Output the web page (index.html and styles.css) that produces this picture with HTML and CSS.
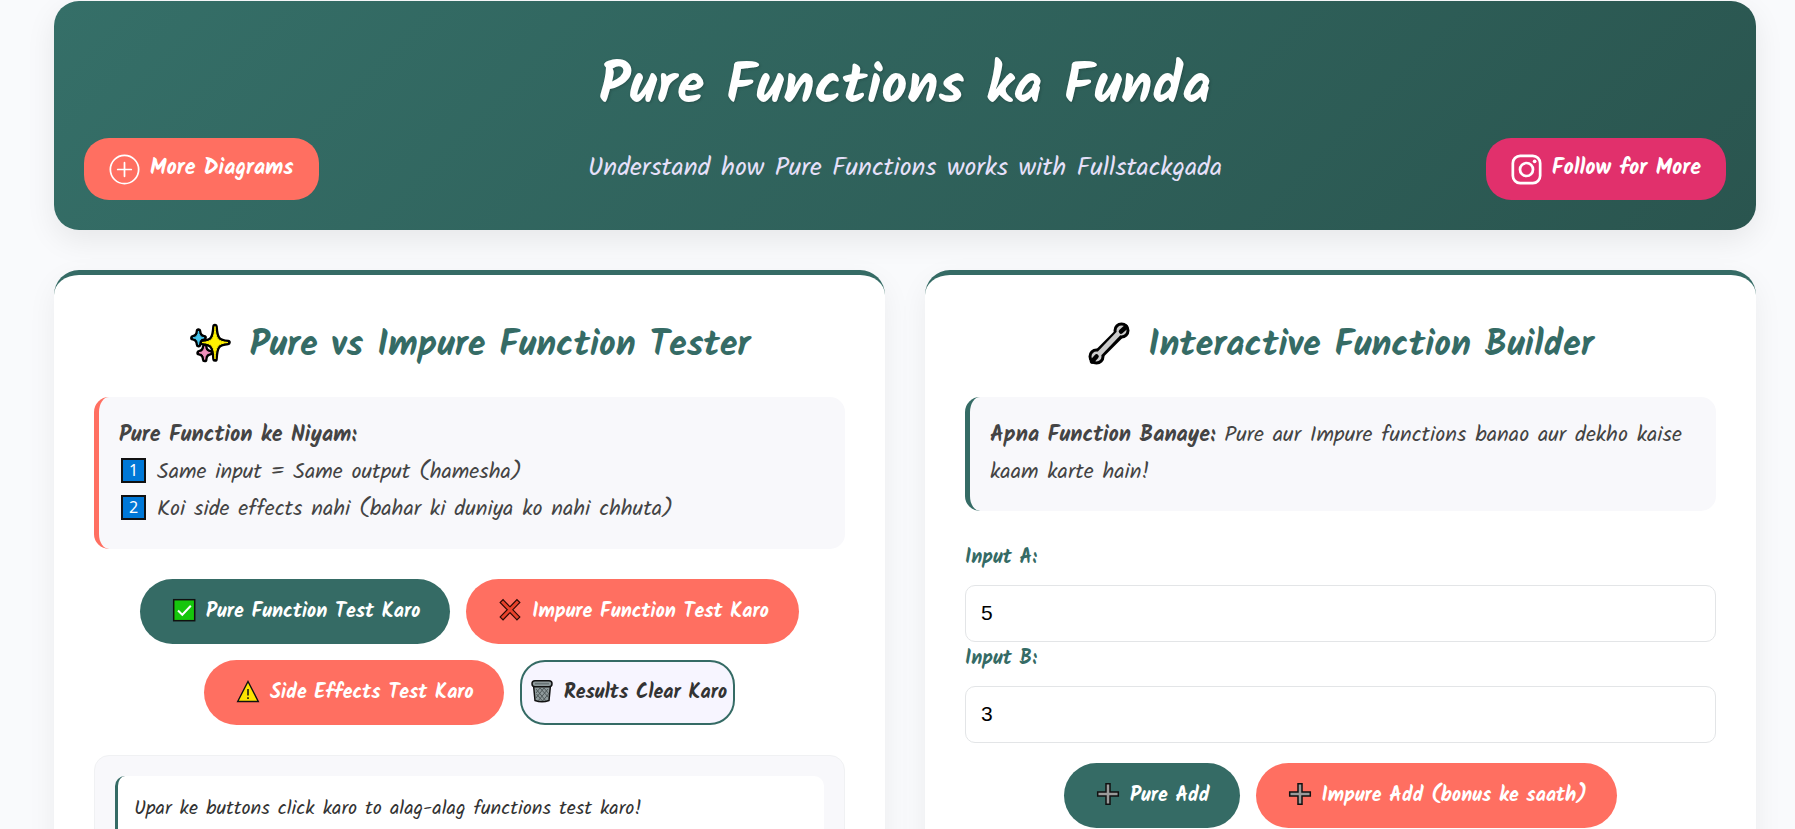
FILE: index.html
```
<!DOCTYPE html>
<html lang="hi-Latn">
<head>
<meta charset="utf-8">
<meta name="viewport" content="width=device-width, initial-scale=1">
<title>Pure Functions ka Funda</title>
<link rel="stylesheet" href="styles.css">
</head>
<body>
<svg class="sprite" aria-hidden="true">
  <symbol id="plus" viewBox="0 0 28 28"><path d="M12 3.700h4v8.300h8.300v4h-8.300v8.300h-4v-8.300H3.700v-4h8.300z" fill="#9a9a9a" stroke="#111" stroke-width="1.5"/></symbol>
</svg>
<header class="hero">
  <h1 class="hero-title">Pure Functions ka Funda</h1>
  <a class="pill pill-more" href="#diagrams">
    <svg class="pill-icon" viewBox="0 0 32 32" fill="none" stroke="#fff" stroke-width="1.8" stroke-linecap="round" aria-hidden="true"><circle cx="16" cy="16" r="14.6"/><path d="M16 9v14M9 16h14"/></svg>
    <span class="pill-text">More Diagrams</span>
  </a>
  <p class="hero-sub">Understand how Pure Functions works with Fullstackgada</p>
  <a class="pill pill-follow" href="#follow">
    <svg class="pill-icon" viewBox="0 0 32 32" fill="none" stroke="#fff" stroke-width="2.8" aria-hidden="true"><rect x="1.9" y="1.9" width="28.2" height="28.2" rx="7.6"/><circle cx="16" cy="16" r="6.7"/><circle cx="24.4" cy="7.6" r="1.9" fill="#fff" stroke="none"/></svg>
    <span class="pill-text">Follow for More</span>
  </a>
</header>

<main class="cards">
  <section class="card">
    <h2 class="card-title">
      <svg class="title-icon" viewBox="0 0 44 44" aria-hidden="true" stroke-linejoin="round">
        <g stroke="#000" stroke-width="5.6"><path d="M9.5 9q.4 6.2 5.6 6.8-5.200 .6-5.600 6.800-.4-6.200-5.600-6.800 5.200-.6 5.600-6.800z"/><path d="M15.700 24.500q.4 5.600 5.600 6.200-5.200 .6-5.600 6.800-.4-6.200-5.600-6.800 5.200-.6 5.600-6.200z"/><path d="M26 4.500c.8 12 2.500 15 13 16-10.500 1-12.200 4-13 16.500-.8-12.500-2.500-15.500-13-16.500 10.500-1 12.200-4 13-16z"/></g>
        <path d="M9.500 9q.4 6.200 5.600 6.800-5.200 .6-5.600 6.800-.4-6.200-5.600-6.800 5.200-.6 5.600-6.800z" fill="#45c5ec" stroke="#45c5ec"/>
        <path d="M15.700 24.500q.4 5.600 5.600 6.200-5.200 .6-5.600 6.800-.4-6.200-5.600-6.800 5.200-.6 5.600-6.200z" fill="#ef8fbb" stroke="#ef8fbb"/>
        <path d="M26 4.500c.8 12 2.500 15 13 16-10.500 1-12.200 4-13 16.500-.8-12.500-2.500-15.500-13-16.500 10.500-1 12.200-4 13-16z" fill="#fff100" stroke="#fff100"/>
      </svg>
      <span>Pure vs Impure Function Tester</span>
    </h2>
    <div class="note note-coral">
      <strong>Pure Function ke Niyam:</strong>
      <ol class="rules">
        <li><span class="keycap">1</span>Same input = Same output (hamesha)</li>
        <li><span class="keycap">2</span>Koi side effects nahi (bahar ki duniya ko nahi chhuta)</li>
      </ol>
    </div>
    <div class="actions">
      <button class="btn btn-teal" type="button">
        <svg class="btn-icon" viewBox="0 0 28 28" aria-hidden="true"><rect x="3.700" y="3.700" width="21" height="21" fill="#16c60c" stroke="#111" stroke-width="1.500"/><path d="M8 14.500l4.300 4.300 8.500-9" fill="none" stroke="#fff" stroke-width="2"/></svg>
        Pure Function Test Karo</button>
      <button class="btn btn-coral" type="button">
        <svg class="btn-icon" viewBox="0 0 28 28" fill="none" aria-hidden="true" stroke-linecap="square"><path d="M7 6.500l14 14.500M21 6.500l-14 14.500" stroke="#2b0a05" stroke-width="5.200"/><path d="M7 6.500l14 14.500M21 6.500l-14 14.500" stroke="#e8412a" stroke-width="2.900"/></svg>
        Impure Function Test Karo</button>
      <button class="btn btn-coral" type="button">
        <svg class="btn-icon" viewBox="0 0 28 28" aria-hidden="true"><path d="M14 4.500L24.300 24.500H3.700z" fill="#fde300" stroke="#111" stroke-width="1.400"/><path d="M14 12v6.500M14 20.300v1.700" stroke="#111" stroke-width="1.500"/></svg>
        Side Effects Test Karo</button>
      <button class="btn btn-clear" type="button">
        <svg class="btn-icon" viewBox="0 0 28 28" aria-hidden="true"><path d="M5.500 8l1.500 15.500q7 2.500 14 0L22.500 8z" fill="#8f9a9c" stroke="#111" stroke-width="1.500"/><path d="M8 12l10 12M12 11l9 10M16 11l5 6M8.500 17l6 7M20 12L10 24M16 11l-8 10M12 11l-4 5M20.500 17l-6 7" stroke="#4a5254" stroke-width=".9"/><rect x="4" y="3.700" width="20" height="6" rx="3" fill="#8f9a9c" stroke="#111" stroke-width="1.500"/><path d="M7 6.700h14" stroke="#687375" stroke-width="1.500"/></svg>
        Results Clear Karo</button>
    </div>
    <div class="results">
      <p class="result">Upar ke buttons click karo to alag-alag functions test karo!</p>
    </div>
  </section>

  <section class="card">
    <h2 class="card-title">
      <svg class="title-icon" viewBox="0 0 44 44" aria-hidden="true"><path d="M10 34L34 10" stroke="#000" stroke-width="10.500"/><circle cx="34.500" cy="8.500" r="6.500" fill="#ccc" stroke="#000" stroke-width="3"/><circle cx="9.500" cy="34.500" r="6.500" fill="#ccc" stroke="#000" stroke-width="3"/><path d="M12 32L32 11" stroke="#ccc" stroke-width="5"/><path d="M34 9.500l5-4.500M9.500 34.500l-4.500 5" stroke="#000" stroke-width="4.500" stroke-linecap="round"/></svg>
      <span>Interactive Function Builder</span>
    </h2>
    <div class="note">
      <strong>Apna Function Banaye:</strong> Pure aur Impure functions banao aur dekho kaise kaam karte hain!
    </div>
    <form class="builder">
      <label class="field-label" for="a">Input A:</label>
      <input class="field" id="a" type="text" inputmode="numeric" value="5">
      <label class="field-label" for="b">Input B:</label>
      <input class="field" id="b" type="text" inputmode="numeric" value="3">
      <div class="actions">
        <button class="btn btn-teal" type="button"><svg class="btn-icon" aria-hidden="true"><use href="#plus"/></svg>Pure Add</button>
        <button class="btn btn-coral" type="button"><svg class="btn-icon" aria-hidden="true"><use href="#plus"/></svg>Impure Add (bonus ke saath)</button>
      </div>
    </form>
  </section>
</main>
</body>
</html>
```
FILE: styles.css
```
:root {
  --teal: #356b65;
  --coral: #ff6f61;
  --soft: #f8f8fb;
}
* { box-sizing: border-box; }
body {
  margin: 0;
  padding: 1px 39px 40px 54px;
  background: #f9fafc;
  color: #333;
  font-family: Kalam, Lato, "Open Sans", sans-serif;
  font-size: 20px;
}
.sprite { position: absolute; width: 0; height: 0; }
h1, h2, p, ol { margin: 0; }

.hero {
  display: grid;
  grid-template-columns: 1fr auto 1fr;
  align-items: center;
  padding: 30px;
  border-radius: 25px;
  background: linear-gradient(135deg, #356f68, #2a554f);
  box-shadow: 0 10px 30px rgba(0, 0, 0, .08);
}
.hero-title {
  grid-column: 1 / -1;
  padding: 17px 0 10px;
  color: #fff;
  font-size: 56px;
  line-height: 80px;
  text-align: center;
  text-shadow: 1px 1px 3px rgba(0, 0, 0, .2);
}
.hero-sub { padding-bottom: 2px; color: #e6e0fa; font-size: 26px; }
.pill {
  display: flex;
  align-items: center;
  gap: 10px;
  justify-self: start;
  height: 62px;
  padding: 0 25px;
  border-radius: 25px;
  color: #fff;
  font-size: 22px;
  font-weight: 700;
  text-decoration: none;
}
.pill-text { padding-bottom: 2px; }
.pill-more { background: var(--coral); }
.pill-follow { justify-self: end; background: #e1306c; }
.pill-icon { width: 31px; height: 31px; flex: none; }

.cards {
  display: grid;
  grid-template-columns: 1fr 1fr;
  gap: 40px;
  margin-top: 40px;
}
.card {
  padding: 40px;
  border-top: 5px solid var(--teal);
  border-radius: 25px;
  background: #fff;
  box-shadow: 0 10px 30px rgba(0, 0, 0, .06);
}
.card-title {
  display: flex;
  align-items: center;
  justify-content: center;
  gap: 17px;
  padding-top: 3px;
  margin-bottom: 24px;
  color: var(--teal);
  font-size: 36px;
  line-height: 55px;
}
.title-icon { width: 44px; height: 44px; margin-bottom: 4px; }

.note {
  margin-bottom: 30px;
  padding: 20px;
  border-left: 5px solid var(--teal);
  border-radius: 15px;
  background: var(--soft);
  color: #444;
  font-size: 22px;
  line-height: 37px;
}
.note-coral { border-color: var(--coral); }
.rules { padding: 0 0 1px; list-style: none; }
.rules li { display: flex; align-items: center; }
.keycap {
  width: 25px;
  height: 25px;
  margin: 0 11px 4px 2px;
  border: 2px solid #111;
  background: #0078d7;
  color: #fff;
  font: 16px/21px "Noto Sans", sans-serif;
  text-align: center;
}

.actions {
  display: flex;
  flex-wrap: wrap;
  justify-content: center;
  gap: 16px;
}
.btn {
  display: flex;
  align-items: center;
  gap: 8px;
  height: 65px;
  padding: 0 30px;
  border: 0;
  border-radius: 33px;
  color: #fff;
  font: inherit;
  font-weight: 700;
}
.btn-teal { background: var(--teal); }
.btn-coral { background: var(--coral); }
.btn-clear {
  padding: 0 6px;
  border: 2px solid var(--teal);
  border-radius: 25px;
  background: #f7f5ff;
  color: #333;
}
.btn-icon { width: 28px; height: 28px; margin-bottom: 4px; flex: none; }

.results {
  margin-top: 30px;
  padding: 20px;
  border: 1px solid #f0f1f3;
  border-radius: 15px;
  background: var(--soft);
}
.result {
  padding: 15px 16px;
  border-left: 3px solid var(--teal);
  border-radius: 10px;
  background: #fff;
  line-height: 36px;
}

.builder { display: flex; flex-direction: column; }
.field-label {
  color: var(--teal);
  font-weight: 700;
  line-height: 34px;
  margin-bottom: 10px;
}
.field {
  width: 100%;
  height: 57px;
  padding: 0 15px 2px;
  border: 1px solid #e3e5e7;
  border-radius: 10px;
  background: #fff;
  color: #000;
  font: 21px "Liberation Sans", Arial, sans-serif;
}
.builder .actions { margin-top: 20px; }
```
